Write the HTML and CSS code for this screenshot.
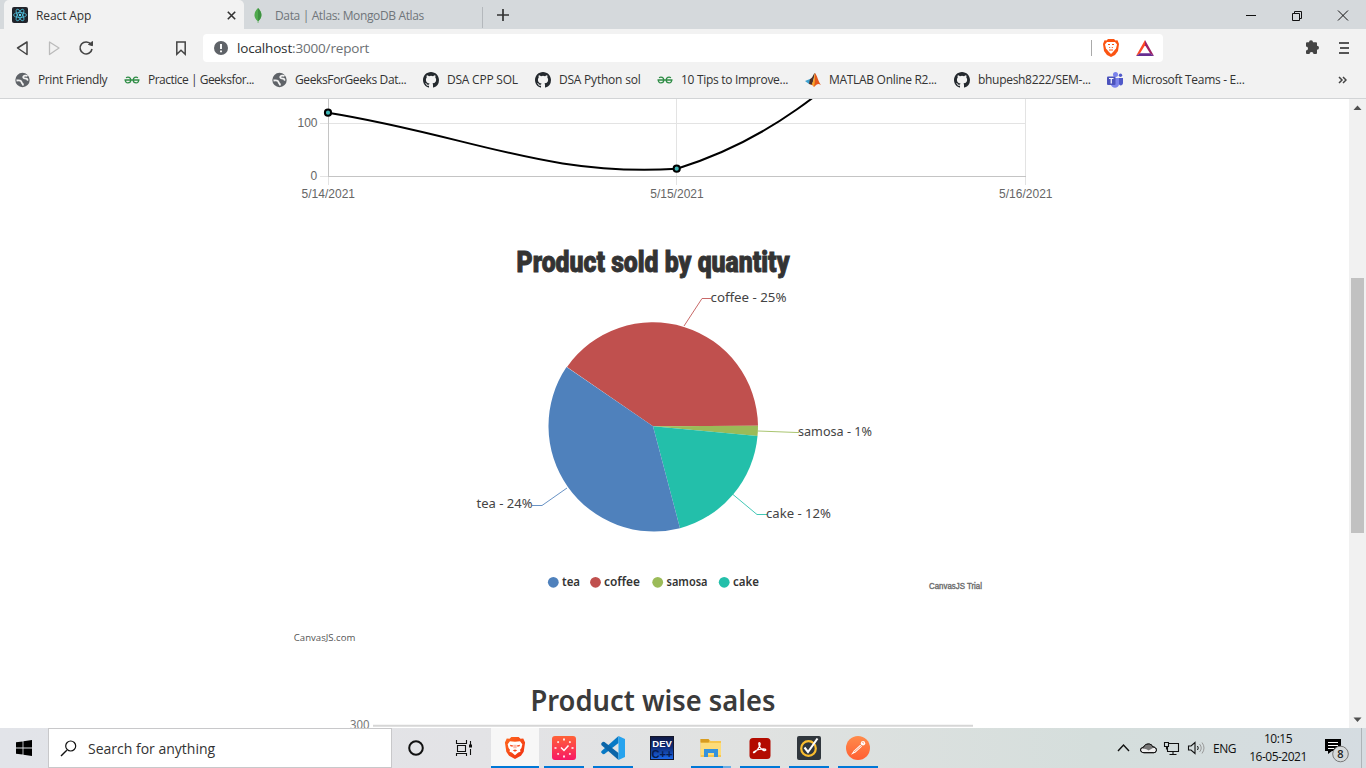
FILE: index.html
```html
<!DOCTYPE html>
<html lang="en">
<head>
<meta charset="utf-8">
<title>React App</title>
<link rel="stylesheet" href="styles.css">
</head>
<body>
<svg class="defs" width="0" height="0">
  <defs>
    <symbol id="globe" viewBox="0 0 16 16"><circle cx="7.500" cy="8" r="7.200" fill="#5f6368"/><path d="M1.500 8.500c3-.6 5 .2 5 1.600s1.800 1 1.500 3.400M12.500 4c-1.500-.8-4-.6-4.300.9-.2 1.300 1.500 1.700 2.800 1.800 1.200.1 1.800 1 1.300 2" fill="none" stroke="#f2f2f2" stroke-width="1.800"/></symbol>
    <symbol id="gfg" viewBox="0 0 16 16"><path d="M.5 8h15M2 5.700c2.200-1.200 4.800-.2 4.800 2.300s-1.500 2.900-3 2.900S1.300 9.800 1.400 8M14 5.700C11.800 4.500 9.200 5.500 9.200 8s1.500 2.900 3 2.900 2.500-1.100 2.400-2.900" fill="none" stroke="#2f8d46" stroke-width="1.300"/></symbol>
    <symbol id="github" viewBox="0 0 16 16"><path fill="#24292e" d="M8 0C3.580 0 0 3.580 0 8c0 3.540 2.290 6.530 5.470 7.590.4.070.55-.17.55-.38v-1.490c-2.230.49-2.700-.94-2.700-.94-.36-.92-.89-1.170-.89-1.170-.73-.5.05-.49.05-.49.81.06 1.230.83 1.230.83.72 1.230 1.880.87 2.340.66.070-.52.28-.87.51-1.070-1.780-.2-3.640-.89-3.640-3.950 0-.87.31-1.590.82-2.150-.08-.2-.36-1.020.08-2.120 0 0 .67-.21 2.200.82a7.400 7.400 0 0 1 4 0c1.530-1.040 2.200-.82 2.200-.82.44 1.100.16 1.920.08 2.120.51.56.82 1.270.82 2.150 0 3.070-1.870 3.750-3.650 3.950.29.25.54.73.54 1.480v2.200c0 .21.15.46.55.38A8.010 8.010 0 0 0 16 8c0-4.420-3.580-8-8-8z"/></symbol>
    <linearGradient id="braveFill" x2="1" y2="1"><stop stop-color="#ff6a1f"/><stop offset="1" stop-color="#f02c10"/></linearGradient>
    <linearGradient id="clockFill" x2="0" y2="1"><stop stop-color="#ff6237"/><stop offset="1" stop-color="#f81766"/></linearGradient>
    <linearGradient id="devFill" x2="0" y2="1"><stop stop-color="#101a45"/><stop offset=".45" stop-color="#0e2a75"/><stop offset="1" stop-color="#1c6bf0"/></linearGradient>
    <linearGradient id="postFill" x2="0" y2="1"><stop stop-color="#ff8b4b"/><stop offset="1" stop-color="#ff5f33"/></linearGradient>
  </defs>
</svg>

<header class="tabs">
  <div class="tab active">
    <svg class="fav" viewBox="0 0 16 16"><rect width="16" height="16" rx="2" fill="#20232a"/><g fill="none" stroke="#4fc3e0" stroke-width=".8"><ellipse cx="8" cy="8" rx="6.500" ry="2.500"/><ellipse cx="8" cy="8" rx="6.500" ry="2.500" transform="rotate(60 8 8)"/><ellipse cx="8" cy="8" rx="6.500" ry="2.500" transform="rotate(120 8 8)"/></g><circle cx="8" cy="8" r="1.200" fill="#61dafb"/></svg>
    <span class="tab-title">React App</span>
    <svg class="close" viewBox="0 0 9 9"><path d="M.8.8l7.400 7.400M8.200.8L.8 8.200" stroke="#333" stroke-width="1.600"/></svg>
  </div>
  <div class="tab idle">
    <svg class="leaf" viewBox="0 0 8 16"><path d="M4 0c5 5 5 10 .4 14V16h-.7V14C-1 10-1 5 4 0z" fill="#4fa94d"/><path d="M4 0v14c4.600-4 4.600-9 0-14z" fill="#3d9140"/></svg>
    <span class="tab-title">Data | Atlas: MongoDB Atlas</span>
  </div>
  <svg class="plus" viewBox="0 0 12 12"><path d="M6 0v12M0 6h12" stroke="#333" stroke-width="1.700"/></svg>
  <svg class="window-buttons" viewBox="0 0 110 14" fill="none" stroke="#111"><path d="M4 7.500h10M50.500 5.500h7v7h-7zM52.500 5.500v-2h7v7h-2M96 2.500l10 10M106 2.500l-10 10"/></svg>
</header>

<div class="toolbar">
  <svg class="nav" viewBox="0 0 203 34" fill="none"><path d="M27 13v12.500L17.500 19z" stroke="#444" stroke-width="1.500" stroke-linejoin="round"/><path d="M49.500 13v12.500L59 19z" stroke="#bbb" stroke-width="1.300" stroke-linejoin="round"/><path d="M91 15.500A6 6 0 1 0 92 20" stroke="#444" stroke-width="1.600"/><path d="M88.500 15.500l4-3v4.200z" fill="#444" stroke="#444"/><path d="M176.800 13h8.400v12.200l-4.200-4-4.200 4z" stroke="#444" stroke-width="1.500"/></svg>
  <div class="address">
    <svg class="info" viewBox="0 0 14 14"><circle cx="7" cy="7" r="7" fill="#5f6368"/><path d="M7 3v5M7 9.500v1.800" stroke="#fff" stroke-width="1.900"/></svg>
    <span class="url"><b>localhost</b>:3000/report</span>
    <i class="rule"></i>
    <svg class="shield" viewBox="0 0 16 18"><path d="M5 0h6l1.500 1.500 2-.2L16 5l-1 7-3 4-4 2-4-2-3-4L0 5l1.500-3.700 2 .2z" fill="#fb5412"/><path d="M4 3h8l2 2.500-1 4-3 3.500-2 2-2-2-3-3.500-1-4z" fill="#fff"/><path d="M5 5.500h2M9 5.500h2M6.700 8v1M9.300 8v1M6 11h4" stroke="#fb5412"/></svg>
    <svg class="bat" viewBox="0 0 18 16"><path d="M9 0L0 16l4-2.700 5-8z" fill="#ff4724"/><path d="M9 0l9 16-4-2.700-5-8z" fill="#9e1f63"/><path d="M0 16h18l-4-2.700H4z" fill="#662d91"/></svg>
  </div>
  <svg class="puzzle" viewBox="0 0 16 16"><path d="M5 3.200a2 2 0 0 1 4 0h3a1 1 0 0 1 1 1v2.600a2 2 0 0 1 0 4V14a1 1 0 0 1-1 1H9.500a2 2 0 0 0-4 0H3a1 1 0 0 1-1-1v-2.600a2 2 0 0 0 0-4V4.200a1 1 0 0 1 1-1z" fill="#444"/></svg>
  <svg class="burger" viewBox="0 0 10 12"><path d="M0 1h10M1 6h9M0 11h10" stroke="#555" stroke-width="1.800"/></svg>
</div>

<nav class="bookmarks">
  <a class="mark first"><svg><use href="#globe"/></svg>Print Friendly</a>
  <a class="mark tight"><svg><use href="#gfg"/></svg>Practice | Geeksfor...</a>
  <a class="mark first"><svg><use href="#globe"/></svg>GeeksForGeeks Dat...</a>
  <a class="mark loose"><svg><use href="#github"/></svg>DSA CPP SOL</a>
  <a class="mark loose"><svg><use href="#github"/></svg>DSA Python sol</a>
  <a class="mark"><svg><use href="#gfg"/></svg>10 Tips to Improve...</a>
  <a class="mark"><svg viewBox="0 0 16 16"><path d="M0 9l5-2 2 3-3 2z" fill="#3ca0cf"/><path d="M5 7c3-1 3-5 5-6l-3 12-3-1z" fill="#49312a"/><path d="M10 1c2 2 3 8 6 12-3-2-4-1-7 2-1-2-2-2-3-2 3-2 3-8 4-12z" fill="#e5571c"/><path d="M10 1c0 6 0 9-1 14l-2-3c2-3 2-7 3-11z" fill="#f8a92b"/></svg>MATLAB Online R2...</a>
  <a class="mark"><svg><use href="#github"/></svg>bhupesh8222/SEM-...</a>
  <a class="mark teams"><svg viewBox="0 0 16 16"><circle cx="8.500" cy="2.600" r="2.500" fill="#7b83eb"/><circle cx="13.500" cy="3.300" r="1.700" fill="#5059c9"/><path d="M10 6h6v5c0 3-4 3-4 1z" fill="#5059c9"/><path d="M4 6h8v6c0 5-8 5-8 0z" fill="#7b83eb"/><rect y="4.500" width="8.500" height="8.500" rx="1" fill="#4b53bc"/><path d="M2 6.500h4.500M4.250 6.500v5" stroke="#fff" stroke-width="1.200"/></svg>Microsoft Teams - E...</a>
  <svg class="more" viewBox="0 0 9 8"><path d="M1 1l3 3-3 3M5 1l3 3-3 3" fill="none" stroke="#444" stroke-width="1.500"/></svg>
</nav>

<main class="viewport">
  <svg class="report" viewBox="0 99 1349 629">
    <g class="grid">
      <path d="M320 123.500h706M676.500 99v86M1025.500 99v86M320 176.500h8M328.500 176v9" stroke="#e3e3e3"/>
      <path d="M328.500 99v78M328 176.500h698" stroke="#c4c4c4"/>
    </g>
    <path d="M328 112.700C468 135 545 177 677 168.700C829 122 886 14 1026 -80" fill="none" stroke="#000" stroke-width="2"/>
    <g fill="#3fb5b5" stroke="#000" stroke-width="2"><circle cx="328" cy="112.700" r="3.100"/><circle cx="676.700" cy="168.700" r="3.100"/></g>
    <g class="axis">
      <text x="297.500" y="127.300" textLength="20">100</text><text x="310.500" y="180.300">0</text>
      <text x="301.500" y="198" textLength="53.500">5/14/2021</text><text x="650.200" y="198" textLength="53.500">5/15/2021</text><text x="999" y="198" textLength="53.500">5/16/2021</text>
    </g>
    <text class="impact" x="516.500" y="272" textLength="273" lengthAdjust="spacingAndGlyphs">Product sold by quantity</text>
    <g>
      <path d="M653 426.300L567 367A105 105 0 0 1 758 425.800z" fill="#c0504e"/>
      <path d="M653 426.300L758 425.800A105 105 0 0 1 757.500 436z" fill="#9bbb58"/>
      <path d="M653 426.300L757.500 436A105 105 0 0 1 680 528.200z" fill="#23bfaa"/>
      <path d="M653 426.300L680 528.200A105.500 105.500 0 0 1 566.500 367z" fill="#4f81bc"/>
    </g>
    <g class="leaders"><path d="M684 326l18-27.500h9" stroke="#c0504e"/><path d="M758 431l39 1.500h2" stroke="#9bbb58"/><path d="M733 494.500l24 20h10" stroke="#23bfaa"/><path d="M567 488l-25 17.500h-10" stroke="#4f81bc"/></g>
    <g class="slice-label">
      <text x="710.500" y="302" textLength="76" lengthAdjust="spacingAndGlyphs">coffee - 25%</text>
      <text x="798" y="435.500" textLength="74" lengthAdjust="spacingAndGlyphs">samosa - 1%</text>
      <text x="766" y="517.500" textLength="65" lengthAdjust="spacingAndGlyphs">cake - 12%</text>
      <text x="476.500" y="508" textLength="56" lengthAdjust="spacingAndGlyphs">tea - 24%</text>
    </g>
    <circle cx="553.300" cy="582.300" r="5.400" fill="#4f81bc"/><circle cx="595.500" cy="582.300" r="5.400" fill="#c0504e"/><circle cx="657.700" cy="582.300" r="5.400" fill="#9bbb58"/><circle cx="724.200" cy="582.300" r="5.400" fill="#23bfaa"/>
    <g class="legend">
      <text x="562" y="586" textLength="18" lengthAdjust="spacingAndGlyphs">tea</text>
      <text x="604" y="586" textLength="36" lengthAdjust="spacingAndGlyphs">coffee</text>
      <text x="666.500" y="586" textLength="41" lengthAdjust="spacingAndGlyphs">samosa</text>
      <text x="733" y="586" textLength="26" lengthAdjust="spacingAndGlyphs">cake</text>
    </g>
    <text class="trial" x="929" y="588.500" textLength="53" lengthAdjust="spacingAndGlyphs">CanvasJS Trial</text>
    <text class="credit" x="293.800" y="641" textLength="61.500" lengthAdjust="spacingAndGlyphs">CanvasJS.com</text>
    <text class="sales" x="530.500" y="711" textLength="245" lengthAdjust="spacingAndGlyphs">Product wise sales</text>
    <text class="tick" x="350" y="729.300" textLength="19.500" lengthAdjust="spacingAndGlyphs">300</text>
    <path d="M373 725.700h600" stroke="#d6d6d6" stroke-width="2"/>
  </svg>
  <div class="scrollbar">
    <svg viewBox="0 0 17 17"><path d="M4.500 11L8.500 6.500l4 4.500z" fill="#505050"/></svg>
    <i class="thumb"></i>
    <svg viewBox="0 0 17 17"><path d="M4.500 6.500h8L8.500 11z" fill="#505050"/></svg>
  </div>
</main>

<footer class="taskbar">
  <div class="start"><svg viewBox="0 0 16 16"><path d="M0 2.300L6.600 1.400v6.200H0zM7.400 1.300L16 0v7.600H7.400zM0 8.400h6.600v6.200L0 13.700zM7.400 8.400H16V16l-8.600-1.200z" fill="#000"/></svg></div>
  <div class="search"><svg viewBox="0 0 17 17"><path d="M6.800 10.200L1 16" stroke="#111" stroke-width="1.400"/><circle cx="10.700" cy="6" r="5" fill="none" stroke="#111" stroke-width="1.200"/></svg>Search for anything</div>
  <div class="sys">
    <svg viewBox="0 0 18 18"><circle cx="9" cy="9" r="6.800" fill="none" stroke="#111" stroke-width="2"/></svg>
    <svg viewBox="0 0 18 18"><path d="M1.500 1v3.500h10V1M1.500 17v-2.500h10V17M2.500 6.500h8v6h-8zM15.500 2v4M15.500 10v6" fill="none" stroke="#111" stroke-width="1.100"/><path d="M14 5.500h3v3h-3z" fill="#111"/></svg>
  </div>
  <div class="apps">
    <div class="app current"><svg viewBox="0 0 24 24"><path d="M8 0h8l2 2 3-.3L23 6l-1.500 10-3 4.500L12 24l-6.500-3.500-3-4.500L1 6l2-4.300L6 2z" fill="url(#braveFill)"/><path d="M6.500 4.500l5.500.7 5.500-.7L20 8l-1 4-1.500 2 .5 2-2.500 1-3.500 3-3.500-3L6 16l.5-2L5 12 4 8z" fill="#fff"/><path d="M6.500 8.500l3.500.8-.8 1.400-2.200-.5zM17.500 8.500l-3.500.8.8 1.400 2.200-.5zM9.500 14.500l2.500-1 2.500 1-2.500 1.600z" fill="#f9471a"/><path d="M11 8.500v3.800M13 8.500v3.800" stroke="#f9471a" stroke-width=".7"/></svg></div>
    <div class="app open"><svg viewBox="0 0 24 24"><rect width="24" height="24" rx="3" fill="url(#clockFill)"/><g stroke="#fff" stroke-width="1.700"><path d="M12 2.500v2M12 19.500v2M2.500 12h2M19.500 12h2M5.500 5.500l1.200 1.200M17.300 17.300l1.200 1.200M18.500 5.500l-1.200 1.200M6.700 17.300l-1.200 1.200"/><path d="M9 11.500l3 3 4.500-5" fill="none" stroke-width="1.500"/></g></svg></div>
    <div class="app open"><svg viewBox="0 0 24 24"><path d="M17.500 0v7L3.500 18 2 18.300.3 16.500v-1.300z" fill="#0879c5"/><path d="M.3 8.500v-1.300L2 5.700l1.500.3 14 11v7L.3 9z" fill="#0b65a8"/><path d="M17.500 0L24 3v18l-6.500 3z" fill="#27a3ee"/></svg></div>
    <div class="app"><svg viewBox="0 0 24 24"><rect x=".5" y=".5" width="23" height="23" fill="url(#devFill)" stroke="#15172a"/><text class="dev" x="2.300" y="11" textLength="19.500" lengthAdjust="spacingAndGlyphs">DEV</text><text class="cpp" x="1.500" y="21.500" textLength="21" lengthAdjust="spacingAndGlyphs">C++</text></svg></div>
    <div class="app open group"><svg viewBox="0 0 24 24"><path d="M1.500 3h8l2 2H22v16H1.500z" fill="#f7c64e"/><path d="M1.500 3h8l1 2-1 1.500h-8z" fill="#d89c20"/><path d="M2 7h20v12H2z" fill="#fddc79"/><path d="M5 13h14v8h-4v-4H9v4H5z" fill="#3592dc"/></svg></div>
    <div class="app open"><svg viewBox="0 0 24 24"><rect x="1.500" y="2" width="21" height="21" rx="3.500" fill="#b30b00"/><path d="M11.300 6.500c2 0 .5 6-4.800 10-2 1-1.500-1.500 4.500-3 6-1.300 7.500 0 6.500.9-1 .8-4.500-.9-6-3.900-.8-2-1-4-.2-4z" fill="none" stroke="#fff" stroke-width="1.200"/></svg></div>
    <div class="app open"><svg viewBox="0 0 24 24"><rect width="24" height="24" rx="2" fill="#30373d"/><circle cx="11.500" cy="12.500" r="7.300" fill="none" stroke="#f9bd2f" stroke-width="2.200"/><path d="M7.500 11.500l3.500 4.500L20.500 2.500" fill="none" stroke="#fff" stroke-width="2.100"/></svg></div>
    <div class="app open"><svg viewBox="0 0 24 24"><circle cx="12" cy="12" r="12" fill="url(#postFill)"/><path d="M5 18.700L8 14.500l6.300-5.700 1.700 1.700-6.500 6z" fill="#fff"/><circle cx="17" cy="7.200" r="2.200" fill="#fff"/><path d="M8 16l7-6M16.300 6.300l1.700 1" stroke="#ff743f" stroke-width=".7"/></svg></div>
  </div>
  <div class="tray">
    <svg class="status" viewBox="0 0 90 20" fill="none" stroke="#111"><path d="M1 13l5.500-6 5.500 6" stroke-width="1.400"/><path d="M27 14.700c-4.500 0-4.500-5.200-.5-5.400 1.500-4.200 8-4.400 9.300-.4 4.800.2 4.500 5.800 1 5.800z" fill="#eee"/><path d="M25.500 11c-.5-1 0-1.500 1-1.700 1.500-4.200 8-4.400 9.300-.4l1 .5-5.300 3.200c-2-1.600-3.500-2.300-6-1.600z" fill="#777" stroke="none"/><path d="M27 14.700c-4.500 0-4.500-5.200-.5-5.400 1.500-4.200 8-4.400 9.300-.4 4.800.2 4.500 5.800 1 5.800z"/><path d="M52 5.500h9.500v8H50.500v-5M56 13.500v3.500M52.500 16.500h7M47.500 4.500h4v4h-4zM49.500 8.500v3" stroke-width="1.100"/><path d="M71.500 8h2.500l4-3.500v11L74 12h-2.500z" stroke-width="1.100"/><path d="M80.500 8q1.500 2 0 4"/><path d="M82.500 6q3.500 4 0 8M85 4.500q4 5.500 0 11" stroke="#999"/></svg>
    <span class="lang">ENG</span>
    <div class="time"><span>10:15</span><span>16-05-2021</span></div>
    <svg class="notice" viewBox="0 0 26 26"><path d="M1 2h16v12H8l-4 3v-3H1z" fill="#000"/><path d="M4 5.500h10M4 8.500h10M4 11.500h6" stroke="#fff"/><circle cx="16.500" cy="17" r="7.800" fill="#d5d9da" stroke="#777"/><text x="16.500" y="21" text-anchor="middle">8</text></svg>
    <i class="peek"></i>
  </div>
</footer>
</body>
</html>
```
FILE: styles.css
```css
* { box-sizing: border-box; }
body { margin: 0; width: 1366px; height: 768px; overflow: hidden; display: flex; flex-direction: column; background: #fff; font: 12px "Open Sans", sans-serif; color: #333; }
svg { display: block; flex: none; }
.defs { height: 0; position: absolute; }

.tabs { flex: 0 0 29px; display: flex; align-items: center; background: #d5d9dc; padding-left: 4px; }
.tab { display: flex; align-items: center; height: 29px; }
.active { width: 240px; padding: 1px 8px 0 8px; background: #f2f2f2; border-radius: 5px 5px 0 0; }
.fav { width: 16px; height: 16px; margin-right: 8px; }
.tab-title { white-space: nowrap; letter-spacing: -0.1px; }
.close { width: 9px; height: 9px; margin-left: auto; }
.idle { width: 239px; padding: 1px 0 0 10px; color: #70757a; background: linear-gradient(#b4b8bc, #b4b8bc) right 7px / 1px 21px no-repeat; }
.idle .tab-title { letter-spacing: -0.36px; }
.leaf { width: 8px; height: 15px; margin-right: 13px; }
.plus { width: 12px; height: 12px; margin: 1px 0 0 14px; }
.window-buttons { width: 110px; height: 14px; margin: 0 14px 0 auto; }

.toolbar { flex: 0 0 34px; display: flex; background: #f2f2f2; }
.nav { width: 203px; height: 34px; }
.address { display: flex; align-items: center; width: 960px; height: 28px; margin-top: 5px; padding: 0 9px 0 11px; background: #fff; border-radius: 4px; }
.info { width: 14px; height: 14px; margin-right: 9px; }
.url { font-size: 13.5px; letter-spacing: -0.17px; color: #6b6f73; }
.url b { font-weight: 400; color: #2d2f31; }
.rule { width: 1px; height: 16px; margin: 0 11px 0 auto; background: #aaa; }
.shield { width: 16px; height: 18px; margin-right: 17px; }
.bat { width: 18px; height: 16px; }
.puzzle { width: 16px; height: 16px; margin: 10px 0 0 141px; }
.burger { width: 10px; height: 12px; margin: 13px 0 0 19px; }

.bookmarks { flex: 0 0 36px; display: grid; grid-template-columns: 109px 148px 151px 112px 122px 148px 149px 153px 231px 9px; align-items: center; padding: 0 0 2px 15px; background: #f2f2f2; border-bottom: 1px solid #d2d4d6; }
.mark { display: flex; align-items: center; gap: 8px; white-space: nowrap; letter-spacing: -0.3px; }
.mark svg { width: 16px; height: 16px; }
.first { gap: 7px; letter-spacing: -0.38px; }
.tight { letter-spacing: -0.5px; }
.loose { letter-spacing: -0.22px; }
.teams { gap: 9px; }
.more { width: 9px; height: 8px; }

.viewport { flex: 0 0 629px; display: flex; }
.report { width: 1349px; height: 629px; }
.leaders { fill: none; stroke-width: 1px; opacity: 0.85; }
.axis text { font: 12px "Liberation Sans", sans-serif; fill: #666; }
.impact { font: 900 29px Roboto, sans-serif; fill: #333; stroke: #333; stroke-width: 0.9px; }
.slice-label text { font: 13px "Noto Sans", sans-serif; fill: #444; }
.legend text { font: 600 12px "Noto Sans", sans-serif; fill: #333; }
.trial { font: 8.5px "Liberation Sans", sans-serif; fill: #555; stroke: #777; stroke-width: 0.4px; }
.credit { font: 9.5px "Open Sans", sans-serif; fill: #555; }
.sales { font: 600 28px "Noto Sans", sans-serif; fill: #3b3b3b; }
.tick { font: 12px "Noto Sans", sans-serif; fill: #777; }
.scrollbar { width: 17px; display: flex; flex-direction: column; align-items: center; justify-content: space-between; background: #f1f1f1; }
.scrollbar svg { width: 17px; height: 17px; }
.thumb { width: 13px; height: 255px; margin-bottom: 16px; background: #c1c1c1; }

.taskbar { flex: 0 0 40px; display: flex; color: #111; background: linear-gradient(90deg, #e2e4e9, #e3e3e6 35%, #e0e2e1 55%, #d5dedc 80%, #d5dce1); }
.start { width: 48px; padding: 12px 16px; }
.start svg { width: 16px; height: 16px; }
.search { width: 344px; display: flex; align-items: center; padding: 0 11px; gap: 11px; border: 1px solid #c8c8ca; background: #fff; font-size: 14px; color: #333; }
.search svg { width: 17px; height: 17px; }
.sys { width: 99px; display: flex; align-items: center; padding-left: 15px; gap: 30px; }
.sys svg { width: 18px; height: 18px; }
.apps { display: flex; gap: 1px; }
.app { width: 48px; height: 40px; display: flex; justify-content: center; padding-top: 8px; }
.app svg { width: 24px; height: 24px; }
.open { background: linear-gradient(#0078d7, #0078d7) center bottom / 40px 2px no-repeat; }
.current { background: #f7f7f7; border-bottom: 2px solid #0078d7; }
.current svg { width: 22px; }
.group { background: linear-gradient(#6aade5, #6aade5) 36px bottom / 8px 2px no-repeat, linear-gradient(#0078d7, #0078d7) 4px bottom / 32px 2px no-repeat; }
.dev { font: bold 9.5px "Liberation Sans", sans-serif; fill: #fff; }
.cpp { font: bold 10px "Liberation Sans", sans-serif; fill: #071c50; }
.tray { display: flex; align-items: center; margin-left: auto; }
.status { width: 90px; height: 20px; margin-right: -1px; }
.lang { width: 36px; padding-left: 7px; letter-spacing: -0.5px; }
.time { width: 72px; display: flex; flex-direction: column; align-items: center; line-height: 18px; letter-spacing: -0.5px; }
.notice { width: 26px; height: 26px; margin: 4px 11px 0 10px; }
.notice text { font: 600 11px "Open Sans", sans-serif; fill: #222; }
.peek { width: 1px; height: 40px; margin-right: 4px; background: #aeb4b8; }
```
